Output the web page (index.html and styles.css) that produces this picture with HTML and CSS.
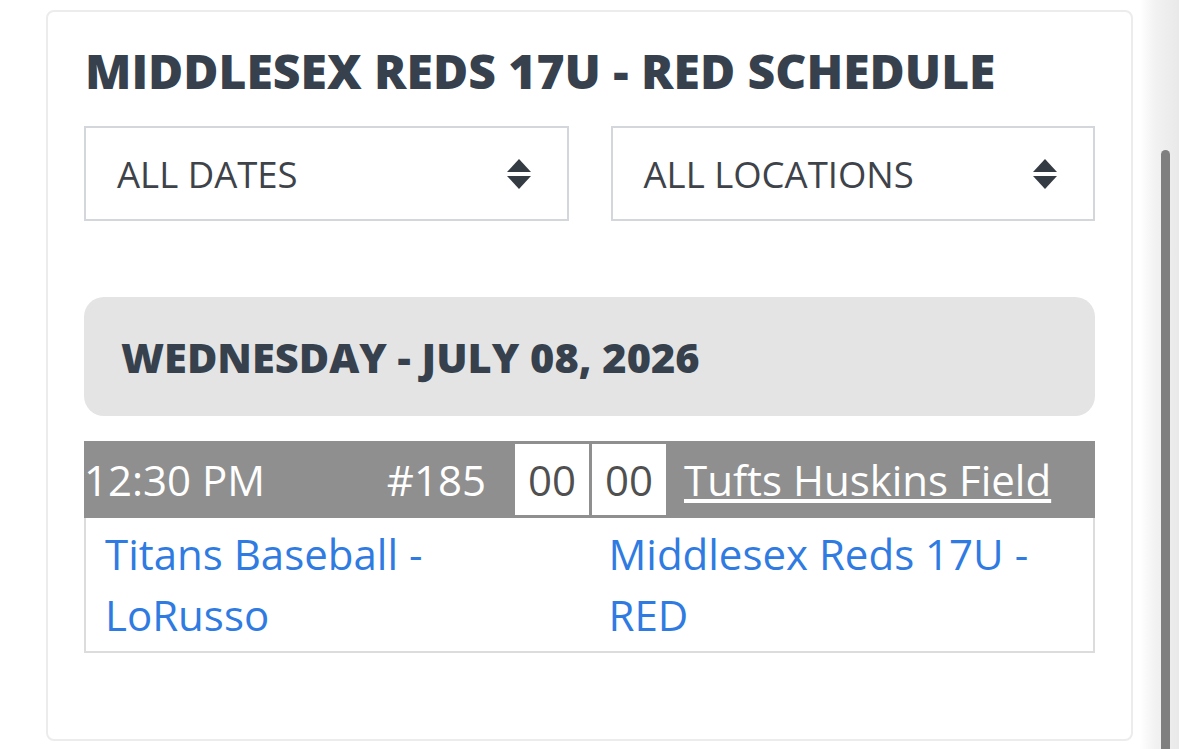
FILE: index.html
```html
<!DOCTYPE html>
<html>
  <head>
    <title>Middlesex Reds 17U - Red Schedule</title>
    <meta charset="UTF-8">
    <meta name="viewport" content="width=device-width, initial-scale=1.0">
    <link rel="stylesheet" href="styles.css">
  </head>

  <body>

    <div class="page">
      <div class="card">
        <h3 class="title">MIDDLESEX REDS 17U - RED SCHEDULE</h3>

        <div class="filters">
          <div class="select">
            <span>ALL DATES</span>
            <span class="arrows"></span>
          </div>
          <div class="select">
            <span>ALL LOCATIONS</span>
            <span class="arrows"></span>
          </div>
        </div>

        <div class="day">WEDNESDAY - JULY 08, 2026</div>

        <div class="game">
          <div class="game-bar">
            <div class="time">12:30 PM</div>
            <div class="num">#185</div>
            <div class="score">00</div>
            <div class="score">00</div>
            <div class="venue"><a href="#">Tufts Huskins Field</a></div>
          </div>
          <div class="teams">
            <a class="team" href="#">Titans Baseball - LoRusso</a>
            <a class="team" href="#">Middlesex Reds 17U - RED</a>
          </div>
        </div>
      </div>
    </div>

    <div class="scrollbar"></div>

  </body>
</html>
```

FILE: styles.css
```css
body {
  margin: 0;
  background: #fff;
  font-family: "Open Sans", "Liberation Sans", sans-serif;
  overflow: hidden;
}

.page {
  padding: 10px 46px 9px 46px;
  background: linear-gradient(to right, #fff 0, #fff 1140px, #f2f2f2 1155px, #e9e9e9 1179px);
}

.card {
  background: #fff;
  border: 2px solid #ececec;
  border-radius: 8px;
  padding: 29px 36px 86px 36px;
}

.title {
  margin: 0 0 25px 1px;
  font-size: 48px;
  line-height: 60px;
  font-weight: 800;
  color: #36414d;
}

.filters {
  display: flex;
  gap: 42px;
}

.select {
  flex: 1;
  height: 91px;
  border: 2px solid #d3d6da;
  display: flex;
  align-items: center;
  justify-content: space-between;
  padding: 0 36px 0 31px;
  font-size: 36.5px;
  color: #3e434a;
}

.arrows {
  width: 24px;
  height: 30px;
  position: relative;
}

.arrows::before, .arrows::after {
  content: "";
  position: absolute;
  left: 0;
  border-left: 12px solid transparent;
  border-right: 12px solid transparent;
}

.arrows::before {
  top: 0;
  border-bottom: 13px solid #353b42;
}

.arrows::after {
  bottom: 0;
  border-top: 13px solid #353b42;
}

.day {
  margin-top: 76px;
  height: 119px;
  background: #e4e4e4;
  border-radius: 20px;
  display: flex;
  align-items: center;
  padding-left: 37px;
  font-size: 41.5px;
  font-weight: 800;
  color: #36414d;
}

.game {
  margin-top: 25px;
}

.game-bar {
  display: flex;
  align-items: stretch;
  gap: 3px;
  background: #8f8f8f;
  padding: 3px 0;
  font-size: 42px;
  color: #fff;
}

.time {
  flex: 1;
  display: flex;
  align-items: center;
}

.num {
  display: flex;
  align-items: center;
  margin-right: 26px;
}

.score {
  width: 74px;
  height: 71px;
  background: #fff;
  color: #505050;
  display: flex;
  align-items: center;
  justify-content: center;
}

.venue {
  width: 411px;
  padding-left: 15px;
  display: flex;
  align-items: center;
}

.venue a {
  color: #fff;
}

.teams {
  display: flex;
  border: 2px solid #dcdcdc;
  border-top: none;
  padding: 5px 0 6px 0;
}

.team {
  flex: 1;
  padding: 0 60px 0 19px;
  font-size: 42px;
  line-height: 61px;
  color: #2f7be2;
  text-decoration: none;
}

.scrollbar {
  position: absolute;
  left: 1161px;
  top: 150px;
  width: 9px;
  height: 620px;
  background: #7f7f7f;
  border-radius: 5px;
}
```
